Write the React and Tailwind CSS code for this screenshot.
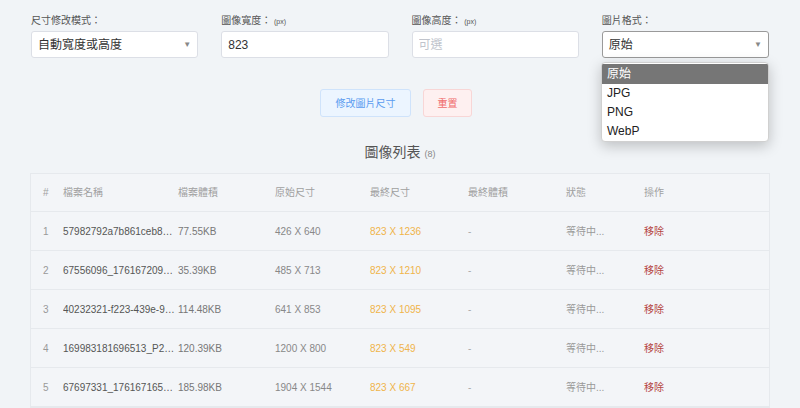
import { useState } from "react";

const font = { fontFamily: '"Liberation Sans", "Noto Sans CJK TC", sans-serif' };

const rows = [
    { id: 1, name: "57982792a7b861ceb8eaf91c.jpg", size: "77.55KB", orig: "426 X 640", final: "823 X 1236" },
    { id: 2, name: "67556096_1761672091.jpg", size: "35.39KB", orig: "485 X 713", final: "823 X 1210" },
    { id: 3, name: "40232321-f223-439e-9a1b.jpg", size: "114.48KB", orig: "641 X 853", final: "823 X 1095" },
    { id: 4, name: "169983181696513_P2.jpg", size: "120.39KB", orig: "1200 X 800", final: "823 X 549" },
    { id: 5, name: "67697331_1761671653.jpg", size: "185.98KB", orig: "1904 X 1544", final: "823 X 667" },
];

const cols = "grid grid-cols-[20px_115px_97px_95px_98px_98px_78px_1fr] pl-[12px] items-center";

export default function App() {
    const [width, setWidth] = useState("823");

    return (
        <div style={font} className="relative w-[800px] h-[408px] overflow-hidden bg-[#f1f4f7] text-[#606266]">
            {/* Form */}
            <div className="grid grid-cols-4 gap-x-[23px] px-[31px] pt-[14px]">
                <div>
                    <div className="text-[10px] text-[#555] h-[17px] leading-[14px]">尺寸修改模式：</div>
                    <div className="h-[27px] bg-white border border-[#dcdfe6] rounded-[3px] flex items-center justify-between px-[6px] text-[12px] text-[#333]">
                        <span>自動寬度或高度</span>
                        <span className="text-[8px] text-[#888]">▼</span>
                    </div>
                </div>
                <div>
                    <div className="text-[10px] text-[#555] h-[17px] leading-[14px]">
                        圖像寬度： <span className="text-[7px]">(px)</span>
                    </div>
                    <input
                        value={width}
                        onChange={(e) => setWidth(e.target.value)}
                        className="w-full h-[27px] bg-white border border-[#dcdfe6] rounded-[3px] px-[6px] text-[12px] text-[#333] outline-none"
                    />
                </div>
                <div>
                    <div className="text-[10px] text-[#555] h-[17px] leading-[14px]">
                        圖像高度： <span className="text-[7px]">(px)</span>
                    </div>
                    <input
                        placeholder="可選"
                        className="w-full h-[27px] bg-white border border-[#dcdfe6] rounded-[3px] px-[6px] text-[12px] text-[#333] outline-none placeholder:text-[#c0c4cc]"
                    />
                </div>
                <div>
                    <div className="text-[10px] text-[#555] h-[17px] leading-[14px]">圖片格式：</div>
                    <div className="h-[27px] bg-white border border-[#9a9a9a] rounded-[3px] flex items-center justify-between px-[6px] text-[12px] text-[#333]">
                        <span>原始</span>
                        <span className="text-[8px] text-[#888]">▼</span>
                    </div>
                </div>
            </div>

            {/* Format dropdown */}
            <div className="absolute left-[601px] top-[62px] w-[168px] bg-white rounded-[4px] shadow-[0_4px_14px_rgba(0,0,0,0.22)] border border-[#d0d0d0] py-[1px] text-[12px] text-[#222] overflow-hidden">
                <div className="h-[20px] leading-[20px] px-[5px] bg-[#767676] text-white">原始</div>
                <div className="h-[19px] leading-[19px] px-[5px]">JPG</div>
                <div className="h-[19px] leading-[19px] px-[5px]">PNG</div>
                <div className="h-[18px] leading-[18px] px-[5px]">WebP</div>
            </div>

            {/* Buttons */}
            <div className="flex justify-center gap-[12px] mt-[31px] pr-[8px]">
                <button className="w-[91px] h-[28px] bg-[#ecf5ff] border border-[#cfe3fb] rounded-[3px] text-[10px] text-[#5a9cf0]">
                    修改圖片尺寸
                </button>
                <button className="w-[49px] h-[28px] bg-[#fef0f0] border border-[#f8d6d6] rounded-[3px] text-[10px] text-[#f06c6c]">
                    重置
                </button>
            </div>

            {/* Title */}
            <div className="text-center mt-[25px] text-[14px] text-[#555] leading-[20px]">
                圖像列表 <span className="text-[9px] text-[#888]">(8)</span>
            </div>

            {/* Table */}
            <div className="mx-[30px] mt-[9px] border border-[#e6e9ed] bg-[#f3f5f8] text-[10px]">
                <div className={`${cols} h-[38px] text-[#a0a0a0] border-b border-[#e6e9ed]`}>
                    <div>#</div>
                    <div>檔案名稱</div>
                    <div>檔案體積</div>
                    <div>原始尺寸</div>
                    <div>最終尺寸</div>
                    <div>最終體積</div>
                    <div>狀態</div>
                    <div>操作</div>
                </div>
                {rows.map((r) => (
                    <div key={r.id} className={`${cols} h-[39px] border-b border-[#e6e9ed]`}>
                        <div className="text-[#999]">{r.id}</div>
                        <div className="truncate pr-[3px] text-[#555]">{r.name}</div>
                        <div className="text-[#777]">{r.size}</div>
                        <div className="text-[#888]">{r.orig}</div>
                        <div className="text-[#f0b44a]">{r.final}</div>
                        <div className="text-[#aaa]">-</div>
                        <div className="text-[#999]">等待中...</div>
                        <div className="text-[#b5443f]">移除</div>
                    </div>
                ))}
            </div>
        </div>
    );
}
